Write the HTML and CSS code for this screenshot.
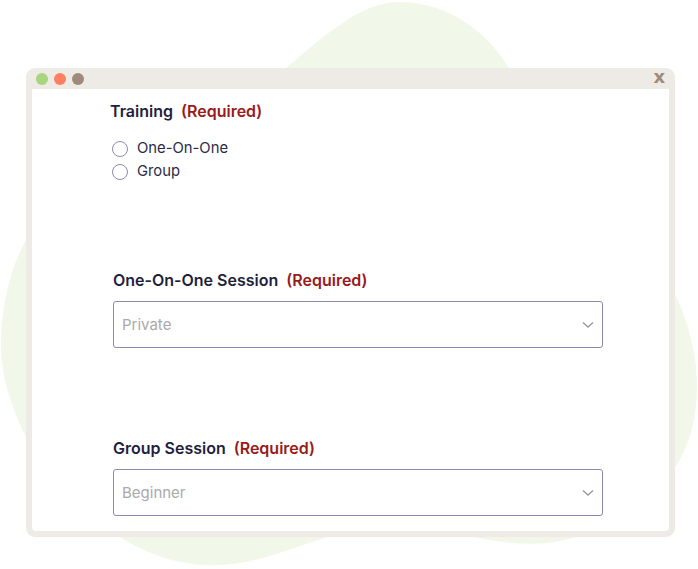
FILE: index.html
```html
<!DOCTYPE html>
<html lang="en">
<head>
<meta charset="utf-8">
<title>Training form</title>
<link rel="stylesheet" href="styles.css">
</head>
<body>
<div class="stage">
  <svg class="blob" width="698" height="569" viewBox="0 0 698 569" aria-hidden="true">
    <path d="M 400 2 C 450 2 490 35 510 70 C 560 160 692 250 697 380 C 700 470 640 525 560 541 C 500 553 440 522 380 526 C 320 530 270 568 205 565 C 130 562 60 500 26 437 C 10 405 0 372 1 340 C 2 300 12 265 26 240 C 60 180 110 160 150 150 C 230 130 300 50 340 25 C 360 10 380 2 400 2 Z" fill="#f1f7e9"/>
  </svg>
  <div class="window">
    <div class="titlebar">
      <span class="dot dot-green"></span>
      <span class="dot dot-red"></span>
      <span class="dot dot-brown"></span>
      <span class="close">x</span>
    </div>
    <div class="content">
      <div class="field field-training">
        <div class="label">Training<span class="req">(Required)</span></div>
        <div class="radios">
          <label class="radio"><span class="circle"></span>One-On-One</label>
          <label class="radio"><span class="circle"></span>Group</label>
        </div>
      </div>
      <div class="field field-select">
        <div class="label">One-On-One Session<span class="req">(Required)</span></div>
        <div class="select">
          <span class="placeholder">Private</span>
          <svg class="chev" width="12" height="8" viewBox="0 0 12 8"><path d="M1 1.5 L6 6 L11 1.5" fill="none" stroke="#9a9a9a" stroke-width="1.4"/></svg>
        </div>
      </div>
      <div class="field field-select">
        <div class="label">Group Session<span class="req">(Required)</span></div>
        <div class="select">
          <span class="placeholder">Beginner</span>
          <svg class="chev" width="12" height="8" viewBox="0 0 12 8"><path d="M1 1.5 L6 6 L11 1.5" fill="none" stroke="#9a9a9a" stroke-width="1.4"/></svg>
        </div>
      </div>
    </div>
  </div>
</div>
</body>
</html>
```

FILE: styles.css
```css
html, body {
  margin: 0;
  padding: 0;
  background: #ffffff;
}

body {
  font-family: Inter, "Noto Sans", sans-serif;
}

.stage {
  position: relative;
  width: 698px;
  height: 569px;
  overflow: hidden;
  padding-top: 68px;
  box-sizing: border-box;
}

.blob {
  position: absolute;
  left: 0;
  top: 0;
  z-index: 0;
}

.window {
  position: relative;
  z-index: 1;
  margin-left: 26px;
  width: 649px;
  height: 469px;
  background: #eeeae6;
  border-radius: 9px;
  padding: 0 6px 6px;
  box-sizing: border-box;
  display: flex;
  flex-direction: column;
}

.titlebar {
  height: 21px;
  display: flex;
  align-items: center;
  gap: 6px;
  padding-left: 4px;
  flex: none;
}

.dot {
  width: 12px;
  height: 12px;
  border-radius: 50%;
  display: block;
}

.dot-green { background: #a9d57e; }
.dot-red { background: #ff8060; }
.dot-brown { background: #a08a7e; }

.close {
  margin-left: auto;
  margin-right: 4px;
  font-family: "DejaVu Sans", sans-serif;
  font-weight: 700;
  font-size: 18px;
  line-height: 1;
  color: #a08a7e;
  margin-top: -3px;
}

.content {
  flex: 1;
  background: #ffffff;
  border-radius: 0 0 4px 4px;
  padding: 12px 0 0 78px;
}

.label {
  font-size: 16px;
  font-weight: 600;
  color: #1f1f3d;
  line-height: 21px;
}

.req {
  color: #9a1a1a;
  margin-left: 8px;
}

.radios {
  margin-top: 16px;
  display: flex;
  flex-direction: column;
  gap: 4px;
}

.radio {
  display: flex;
  align-items: center;
  font-size: 14.8px;
  color: #2b2b48;
  line-height: 18px;
  margin-left: 2px;
}

.circle {
  width: 16px;
  height: 16px;
  border: 1px solid #8e8bb0;
  border-radius: 50%;
  box-sizing: border-box;
  margin-right: 9px;
  margin-top: 3px;
}

.field-select {
  margin-left: 3px;
  margin-top: 90px;
}

.field-select + .field-select {
  margin-top: 90px;
}

.field-select .label {
  margin-bottom: 10px;
}

.select {
  width: 490px;
  height: 47px;
  box-sizing: border-box;
  border: 1px solid #8c89b0;
  border-radius: 3px;
  display: flex;
  align-items: center;
  padding: 0 8px 0 8px;
}

.placeholder {
  font-size: 15px;
  color: #a9a9a9;
  flex: 1;
}

.chev {
  display: block;
}
```
